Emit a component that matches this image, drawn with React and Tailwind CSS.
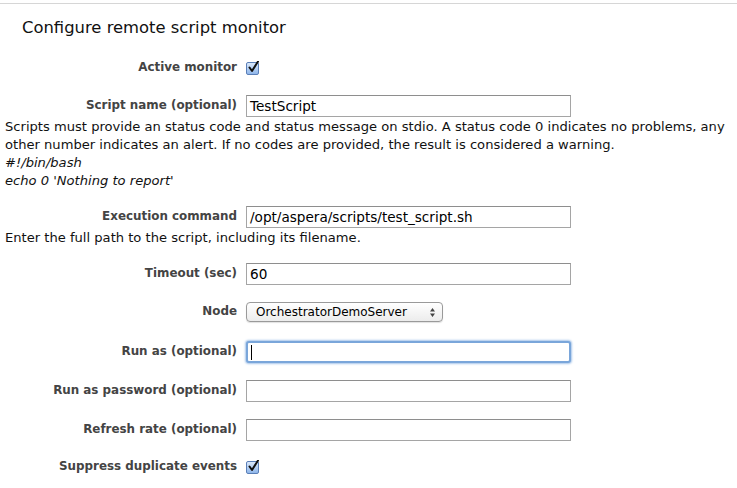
import React from "react";

const font = { fontFamily: '"DejaVu Sans", Verdana, sans-serif' };

function Check() {
  return (
    <span className="relative inline-block w-[13px] h-[13px] rounded-[2px] border border-[#5a7fb8] bg-gradient-to-b from-[#dbe9fb] to-[#8fb6ea]">
      <svg viewBox="0 0 13 13" className="absolute left-[0px] top-[-2px] w-[13px] h-[13px]">
        <path d="M2.5 6.5 L5 10 L11 0.5" fill="none" stroke="#111" strokeWidth="2" strokeLinecap="round" strokeLinejoin="round" />
      </svg>
    </span>
  );
}

function Row({ label, children, className = "" }) {
  return (
    <div className={"flex items-center h-[22px] " + className}>
      <div className="w-[237px] text-right font-bold text-[11.9px] text-[#444]">{label}</div>
      <div className="ml-[9px] flex items-center">{children}</div>
    </div>
  );
}

function Input({ value = "" }) {
  return (
    <div className="w-[325px] h-[22px] border border-[#a5a5a5] border-t-[#8e8e8e] bg-white flex items-center pl-[3px] text-[13.6px] text-black">
      {value}
    </div>
  );
}

export default function App() {
  return (
    <div style={font} className="w-[737px] h-[488px] bg-white overflow-hidden pt-[3px]">
      <div className="border-t border-[#d6d6d6]">
        <div className="pl-[22px] pt-[13px] text-[16.4px] text-[#111] leading-[22px]">Configure remote script monitor</div>
        <Row label="Active monitor" className="mt-[18px]">
          <Check />
        </Row>
        <Row label="Script name (optional)" className="mt-[16px]">
          <Input value="TestScript" />
        </Row>
        <div className="pl-[5px] pr-[4px] text-[13.1px] leading-[18px] text-[#111] mt-[1px]">
          <div>Scripts must provide an status code and status message on stdio. A status code 0 indicates no problems, any other number indicates an alert. If no codes are provided, the result is considered a warning.</div>
          <div className="italic">#!/bin/bash</div>
          <div className="italic">echo 0 'Nothing to report'</div>
        </div>
        <Row label="Execution command" className="mt-[16px]">
          <Input value="/opt/aspera/scripts/test_script.sh" />
        </Row>
        <div className="pl-[5px] text-[13.1px] leading-[18px] text-[#111] mt-[1px]">
          Enter the full path to the script, including its filename.
        </div>
        <Row label="Timeout (sec)" className="mt-[16px]">
          <Input value="60" />
        </Row>
        <Row label="Node" className="mt-[16px]">
          <div className="w-[197px] h-[20px] rounded-[4px] border border-[#9a9a9a] bg-gradient-to-b from-white to-[#ececec] flex items-center justify-between pl-[9px] pr-[6px] text-[12px] text-black shadow-[0_1px_1px_rgba(0,0,0,0.12)]">
            <span>OrchestratorDemoServer</span>
            <svg viewBox="0 0 7 11" className="w-[7px] h-[11px]">
              <path d="M1 4.5 L3.5 1 L6 4.5 Z M1 6.5 L3.5 10 L6 6.5 Z" fill="#444" />
            </svg>
          </div>
        </Row>
        <Row label="Run as (optional)" className="mt-[18px]">
          <div className="w-[325px] h-[22px] rounded-[3px] border-[2px] border-[#7aa6da] shadow-[0_0_2px_1px_rgba(110,160,220,0.6)] bg-white flex items-center pl-[3px]">
            <span className="w-[1px] h-[15px] bg-black" />
          </div>
        </Row>
        <Row label="Run as password (optional)" className="mt-[17px]">
          <Input />
        </Row>
        <Row label="Refresh rate (optional)" className="mt-[17px]">
          <Input />
        </Row>
        <Row label="Suppress duplicate events" className="mt-[15px]">
          <Check />
        </Row>
      </div>
    </div>
  );
}
